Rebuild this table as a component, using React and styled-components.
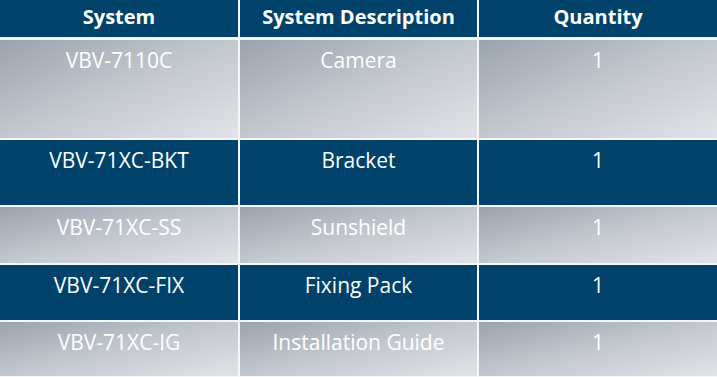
import React from "react";
import styled, { createGlobalStyle } from "styled-components";

const Global = createGlobalStyle`
  html, body { margin: 0; padding: 0; background: #ffffff; }
  body { width: 717px; height: 377px; overflow: hidden; }
`;

const Table = styled.div`
  display: grid;
  grid-template-columns: 238px 237px 238px;
  grid-template-rows: 38px 98px 65px 56px 55px 54px;
  column-gap: 2px;
  row-gap: 2px;
  width: 717px;
  height: 377px;
  background: #f4f6f8;
  font-family: "Open Sans", "Noto Sans", sans-serif;
`;

const HeadCell = styled.div`
  background: #00426a;
  color: #ffffff;
  font-weight: 700;
  font-size: 20px;
  line-height: 20px;
  text-align: center;
  padding-top: 7px;
  margin-bottom: 1px;
`;

const Cell = styled.div`
  background: ${(p) =>
    p.$dark
      ? "#00426a"
      : "linear-gradient(to bottom right, #9aa3af 0%, #c3c8cf 50%, #e1e3e7 100%)"};
  color: #ffffff;
  font-size: 21px;
  line-height: 21px;
  text-align: center;
  padding-top: 10px;
`;

const rows = [
  ["VBV-7110C", "Camera", "1", false],
  ["VBV-71XC-BKT", "Bracket", "1", true],
  ["VBV-71XC-SS", "Sunshield", "1", false],
  ["VBV-71XC-FIX", "Fixing Pack", "1", true],
  ["VBV-71XC-IG", "Installation Guide", "1", false],
];

export default function App() {
  return (
    <>
      <Global />
      <Table>
        <HeadCell>System</HeadCell>
        <HeadCell>System Description</HeadCell>
        <HeadCell>Quantity</HeadCell>
        {rows.map(([a, b, c, dark]) => (
          <React.Fragment key={a}>
            <Cell $dark={dark}>{a}</Cell>
            <Cell $dark={dark}>{b}</Cell>
            <Cell $dark={dark}>{c}</Cell>
          </React.Fragment>
        ))}
      </Table>
    </>
  );
}
